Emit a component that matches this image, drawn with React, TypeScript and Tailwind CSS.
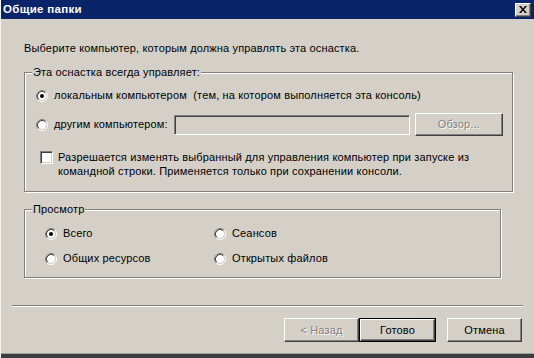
import React from "react";

const raised =
  "border border-t-white border-l-white border-b-[#404040] border-r-[#404040] shadow-[inset_-1px_-1px_0_#808080,inset_1px_1px_0_#d4d0c8]";
const sunken =
  "border border-t-[#808080] border-l-[#808080] border-b-white border-r-white shadow-[inset_1px_1px_0_#404040,inset_-1px_-1px_0_#d4d0c8]";

function Radio({ checked }: { checked?: boolean }) {
  return (
    <svg width="12" height="12" viewBox="0 0 12 12" className="shrink-0">
      <circle cx="6" cy="6" r="4" fill="#fff" />
      <path d="M2.11 9.89 A5.5 5.5 0 0 1 9.89 2.11" stroke="#808080" fill="none" />
      <path d="M9.89 2.11 A5.5 5.5 0 0 1 2.11 9.89" stroke="#fff" fill="none" />
      <path d="M2.82 9.18 A4.5 4.5 0 0 1 9.18 2.82" stroke="#404040" fill="none" />
      <path d="M9.18 2.82 A4.5 4.5 0 0 1 2.82 9.18" stroke="#d4d0c8" fill="none" />
      {checked && <circle cx="6" cy="6" r="2" fill="#000" />}
    </svg>
  );
}

function RadioRow({ label, checked }: { label: string; checked?: boolean }) {
  return (
    <div className="flex items-center gap-[6px] shrink-0">
      <Radio checked={checked} />
      <span className="whitespace-pre">{label}</span>
    </div>
  );
}

function GroupBox({
  title,
  className,
  children,
}: {
  title: string;
  className: string;
  children: React.ReactNode;
}) {
  return (
    <div
      className={`relative border border-[#808080] shadow-[1px_1px_0_#fff,inset_1px_1px_0_#fff] ${className}`}
    >
      <span className="absolute -top-[8px] left-[7px] bg-[#d4d0c8] px-px leading-[14px]">
        {title}
      </span>
      {children}
    </div>
  );
}

const disabledText = "text-[#808080] [text-shadow:1px_1px_0_#fff]";

export default function App() {
  return (
    <div
      className="w-[534px] h-[358px] bg-[#d4d0c8] flex flex-col overflow-hidden text-[11px] leading-[13px] tracking-[0.15px] text-black border-l border-l-[#f4f3ee]"
      style={{ fontFamily: '"Liberation Sans", Arial, sans-serif' }}
    >
      {/* title bar */}
      <div className="h-[19px] bg-[#0a246a] flex items-center justify-between pl-[2px] pr-[3px] shrink-0">
        <span className="text-white font-bold text-[11.5px] tracking-[0.3px]">Общие папки</span>
        <div className={`w-[16px] h-[14px] bg-[#d4d0c8] flex items-center justify-center ${raised}`}>
          <svg width="8" height="7" viewBox="0 0 8 7">
            <path d="M0 0h2l2 2.5L6 0h2L5 3.5 8 7H6L4 4.5 2 7H0l3-3.5z" fill="#000" />
          </svg>
        </div>
      </div>

      <div className="pl-[23px] mt-[23px]">
        Выберите компьютер, которым должна управлять эта оснастка.
      </div>

      {/* group 1 */}
      <GroupBox title="Эта оснастка всегда управляет:" className="ml-[23px] w-[489px] h-[120px] mt-[17px] shrink-0">
        <div className="flex flex-col pl-[11px] pt-[16px]">
          <RadioRow checked label="локальным компьютером  (тем, на котором выполняется эта консоль)" />
          <div className="flex items-center mt-[11px]">
            <RadioRow label="другим компьютером:" />
            <div className={`ml-[6px] w-[236px] h-[20px] bg-[#d4d0c8] ${sunken}`} />
            <div
              className={`ml-[5px] w-[88px] h-[23px] bg-[#d4d0c8] flex items-center justify-center ${raised} ${disabledText}`}
            >
              Обзор...
            </div>
          </div>
          <div className="flex items-start mt-[14px] pl-[4px]">
            <div className={`w-[13px] h-[13px] bg-white shrink-0 mt-[1px] ${sunken}`} />
            <div className="ml-[5px] leading-[14px] whitespace-pre">
              {"Разрешается изменять выбранный для управления компьютер при запуске из\nкомандной строки. Применяется только при сохранении консоли."}
            </div>
          </div>
        </div>
      </GroupBox>

      {/* group 2 */}
      <GroupBox title="Просмотр" className="ml-[23px] w-[477px] h-[69px] mt-[17px] shrink-0">
        <div className="grid grid-cols-[169px_1fr] gap-y-[12px] pl-[20px] pt-[17px]">
          <RadioRow checked label="Всего" />
          <RadioRow label="Сеансов" />
          <RadioRow label="Общих ресурсов" />
          <RadioRow label="Открытых файлов" />
        </div>
      </GroupBox>

      {/* separator */}
      <div className="ml-[11px] w-[511px] mt-[27px] border-t border-t-[#808080] border-b border-b-white shrink-0" />

      {/* buttons */}
      <div className="flex justify-end pr-[12px] mt-[11px] shrink-0">
        <div className={`w-[75px] h-[24px] flex items-center justify-center ${raised} ${disabledText}`}>
          &lt; Назад
        </div>
        <div className="w-[77px] h-[24px] border border-black flex">
          <div className={`flex-1 flex items-center justify-center ${raised}`}>Готово</div>
        </div>
        <div className={`ml-[11px] w-[75px] h-[24px] flex items-center justify-center ${raised}`}>
          Отмена
        </div>
      </div>

      <div className="flex-1" />
      <div className="h-[5px] shrink-0 border-t border-t-[#a0a0a0] bg-[#3c3c3c]" />
    </div>
  );
}
